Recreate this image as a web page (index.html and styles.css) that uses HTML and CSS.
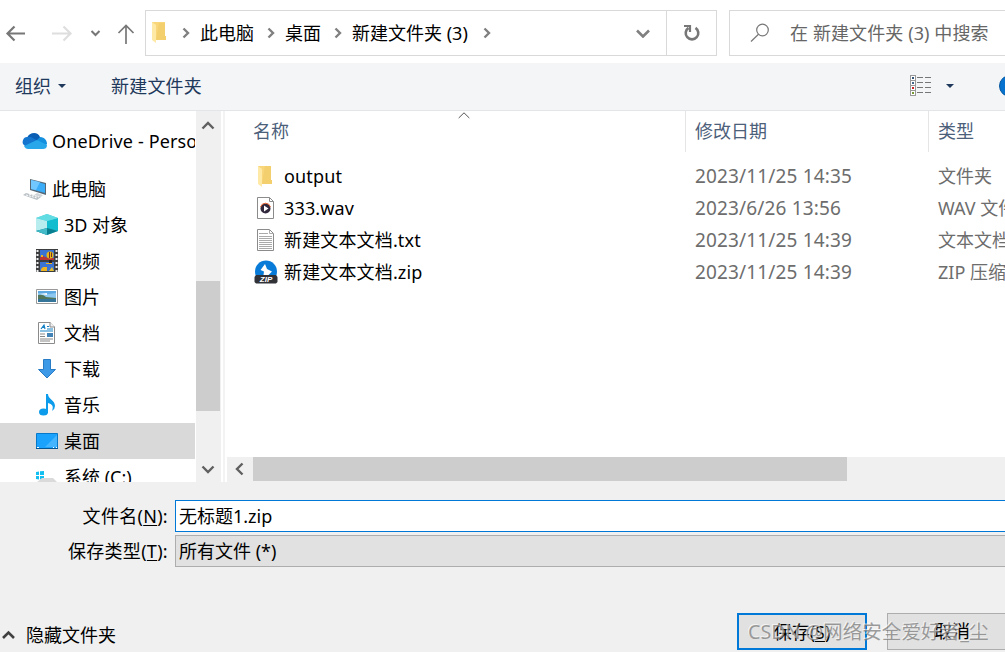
FILE: index.html
```html
<!DOCTYPE html>
<html lang="zh-CN">
<head>
    <meta charset="UTF-8">
    <title>另存为</title>
    <link rel="stylesheet" href="styles.css">
</head>
<body>
<div class="dialog">
    <div class="nav">
        <svg class="nav-btn" width="145" height="63" fill="none">
            <path d="M25 33.5H8M14.500 26.500L7.500 33.500L14.500 40.500" stroke="#777" stroke-width="2.200"/>
            <path d="M52 33.500H69M63.500 26.500L70.500 33.500L63.500 40.500" stroke="#dedede" stroke-width="2.200"/>
            <path d="M91.500 31L95.500 35L99.500 31" stroke="#777" stroke-width="2"/>
            <path d="M126 44V26M118.500 33L126 25.500L133.500 33" stroke="#777" stroke-width="1.700"/>
        </svg>
        <div class="address">
            <svg class="folder" width="16" height="22" viewBox="0 0 16 22"><path d="M1 0H14V14H15V18H5L1 16Z" fill="#f8d679"/><path d="M8 1H14V14H15V18H5Z" fill="#efc862" opacity=".5"/><path d="M1 0L5 3V21L1 18Z" fill="#ffe9a6"/></svg>
            <svg class="sep" width="8" height="12"><path d="M1.500 1.500L6 6L1.500 10.500"/></svg>
            <span class="crumb crumb1">此电脑</span>
            <svg class="sep" width="8" height="12"><path d="M1.500 1.500L6 6L1.500 10.500"/></svg>
            <span class="crumb crumb2">桌面</span>
            <svg class="sep" width="8" height="12"><path d="M1.500 1.500L6 6L1.500 10.500"/></svg>
            <span class="crumb crumb3">新建文件夹 (3)</span>
            <svg class="sep" width="8" height="12"><path d="M1.500 1.500L6 6L1.500 10.500"/></svg>
            <svg class="drop" width="14" height="9"><path d="M1 1.500L7 7.500L13 1.500" fill="none" stroke="#808080" stroke-width="2.600"/></svg>
            <div class="refresh">
                <svg width="18" height="18" fill="none"><path d="M5.500 3.800A6.300 6.300 0 1 0 12.500 3.800" stroke="#777" stroke-width="2.600"/><path d="M1 2H7V8" stroke="#777" stroke-width="2.200"/></svg>
            </div>
        </div>
        <div class="search">
            <svg width="20" height="20" fill="none" stroke="#777" stroke-width="1.200"><circle cx="12.500" cy="7" r="5.800"/><path d="M8.500 11.300L1 18.500"/></svg>
            <span>在 新建文件夹 (3) 中搜索</span>
        </div>
    </div>

    <div class="toolbar">
        <span class="tool">组织</span>
        <i class="arrow"></i>
        <span class="tool new">新建文件夹</span>
        <svg class="view" width="22" height="22" shape-rendering="crispEdges">
            <path d="M.5 .5H5.500V20.500H.5ZM.5 5.500H5.500M.5 10.500H5.500M.5 15.500H5.500" fill="#fff" stroke="#999"/>
            <path d="M7 2.500H13M15 2.500H21M7 7.500H13M15 7.500H21M7 12.500H13M15 12.500H21M7 17.500H13M15 17.500H21" stroke="#777"/>
            <path d="M2 2h2v2h-2z" fill="#357"/><path d="M2 7h2v2h-2z" fill="#468"/><path d="M2 12h2v2h-2z" fill="#c22"/><path d="M2 17h2v2h-2z" fill="#793"/>
        </svg>
        <i class="arrow"></i>
        <i class="help"></i>
    </div>

    <div class="main">
        <div class="side">
            <div class="item top onedrive">
                <svg width="26" height="18" viewBox="0 0 26 18"><path d="M5 6C7 0 16-1 18 5L21 9L8 13L3 9Z" fill="#0a5fb4"/><path d="M5 5C1 5 0 10 1 12L4 15L16 9L9 5Z" fill="#1375cd"/><path d="M15 8L18 5C23 5 25 9 25 12L22 15Z" fill="#1490df"/><path d="M2 14L15 8L25 13C25 16 23 17 21 17H6C4 17 3 16 2 14Z" fill="#28a8ea"/></svg>
                <span>OneDrive - Personal</span>
            </div>
            <div class="item top">
                <svg width="26" height="24" viewBox="0 0 26 24"><path d="M8 2L24 6V18L8 13Z" fill="#566875"/><path d="M9 3L23 7V16L9 12Z" fill="#3badf8"/><path d="M9 3L18 5L14 13L9 12Z" fill="#71c7ff"/><path d="M15 16L21 18L19 20L12 18Z" fill="#d0d5d9"/><path d="M4 16L19 20L15 23L1 18Z" fill="#bbc2c7"/><path d="M4 18L15 21M7 17L17 20" stroke="#fff" stroke-dasharray="2 1"/></svg>
                <span>此电脑</span>
            </div>
            <div class="item">
                <svg width="24" height="24" viewBox="0 0 24 24"><path d="M1 5L12 1L23 5V18L12 22L1 18Z" fill="#57ced9"/><path d="M1 5L12 8V16L1 18Z" fill="#b8edf0"/><path d="M12 8L23 5V18L12 16Z" fill="#12bdd0"/><path d="M1 18L12 15L23 18L12 22Z" fill="#087f91"/><path d="M1 5L12 1L23 5L12 8Z" fill="#62dce3"/><path d="M1 18L12 15V22Z" fill="#42bac7"/></svg>
                <span>3D 对象</span>
            </div>
            <div class="item">
                <svg width="24" height="24" viewBox="0 0 24 24"><path d="M1 0H23V23H1Z" fill="#3c3d3f"/><path d="M5 1H19V11H5ZM5 13H19V22H5Z" fill="#3974d4"/><path d="M2.500 1V23M21.500 1V23" stroke="#eee" stroke-width="2" stroke-dasharray="2 2"/><path d="M5 8L8 7L13 9L19 9V11H5Z" fill="#b93535"/><path d="M6 6h2v2h-2zM11 14h6v1h-6zM6 20L8 18H12V22H6Z" fill="#edb321"/><ellipse cx="15" cy="6" rx="3.500" ry="3.500" fill="#e9b817"/><path d="M14.500 3V9M16.500 3.500V8" stroke="#74302f"/><path d="M14 11H17V14H14Z" fill="#281f24"/><path d="M14 22L17 18L19 22Z" fill="#e5be2d"/></svg>
                <span>视频</span>
            </div>
            <div class="item">
                <svg width="24" height="24" viewBox="0 0 24 24"><path d="M1.500 4.500H22.500V18.500H1.500Z" fill="#fff" stroke="#999"/><path d="M3 6H21V17H3Z" fill="#8cc8f0"/><path d="M3 6H21V8L14 9L3 8Z" fill="#5ea9e2"/><path d="M3 10Q8 9 11 12L21 13V15H3Z" fill="#51765a"/><path d="M3 14L21 14V17H3Z" fill="#35759a"/><path d="M5 9L12 8V10Z" fill="#fff"/></svg>
                <span>图片</span>
            </div>
            <div class="item">
                <svg width="24" height="24" viewBox="0 0 24 24"><path d="M3.500 1.500H15L19.500 6V22.500H3.500Z" fill="#fff" stroke="#8b8b8b"/><path d="M15 1V6H20" fill="#eee" stroke="#8b8b8b"/><path d="M6 8L9 4L10 8M7 6.500H10M12 5.500H14M12 8H18M5 10H18" fill="none" stroke="#1681c5" stroke-width="1.200"/><path d="M5 13H10M5 15.500H10M5 18H18M5 20H15" stroke="#888"/><path d="M12 12H18V16H12Z" fill="#4382b5"/></svg>
                <span>文档</span>
            </div>
            <div class="item">
                <svg width="24" height="24" viewBox="0 0 24 24"><path d="M8.500 2.500H15.500V12.500H20.500L12 21L3.500 12.500H8.500Z" fill="#3e99e7" stroke="#287cc6"/></svg>
                <span>下载</span>
            </div>
            <div class="item">
                <svg width="24" height="24" viewBox="0 0 24 24"><ellipse cx="8.500" cy="19" rx="4.500" ry="3.500" fill="#0c9ceb"/><path d="M11 1H13C13 6 20 7 20 13Q20 16 17 18C19 13 17 11 13 10V20H11Z" fill="#0c9ceb"/></svg>
                <span>音乐</span>
            </div>
            <div class="item selected">
                <svg width="24" height="24" viewBox="0 0 24 24"><path d="M1.500 4.500H22.500V19.500H1.500Z" fill="#1aa2fd" stroke="#0879c8"/><path d="M13 15L22 6V18H10Z" fill="#45b5ff"/><path d="M1 19.500H23" stroke="#075590"/><path d="M2 18.500H4M18 18.500H19M21 18.500H22" stroke="#fff"/></svg>
                <span>桌面</span>
            </div>
            <div class="item">
                <svg width="24" height="24" viewBox="0 0 24 24"><path d="M1 7L4 6.500V10H1ZM5 6.300L9 6V10H5ZM1 11H4V14.500L1 14ZM5 11H9V15L5 14.500Z" fill="#12bff0"/><path d="M1 18L7 13H18L23 18V22H1Z" fill="#dadada"/><path d="M1 18H23V23H1Z" fill="#aaa"/></svg>
                <span class="disk">系统 (C:)</span>
            </div>
        </div>
        <div class="vscroll">
            <svg width="14" height="9"><path d="M1.500 7.500L7 2L12.500 7.500"/></svg>
            <div class="thumb"></div>
            <svg class="down" width="14" height="9"><path d="M1.500 1.500L7 7L12.500 1.500"/></svg>
        </div>
        <div class="content">
            <div class="head">
                <div class="name">名称<svg class="sort" width="12" height="7"><path d="M.7 6L6 .8L11.300 6" fill="none" stroke="#555"/></svg></div>
                <div class="date">修改日期</div>
                <div class="type">类型</div>
            </div>
            <div class="row">
                <div class="name"><svg width="24" height="24" viewBox="0 0 24 24"><path d="M4 2H17V16H18V20H8L4 18Z" fill="#f8d679"/><path d="M11 2H17V16H18V20H8Z" fill="#efc862" opacity=".5"/><path d="M4 2L8 5V23L4 20Z" fill="#ffe9a6"/></svg><span class="file">output</span></div>
                <div class="date">2023/11/25 14:35</div>
                <div class="type">文件夹</div>
            </div>
            <div class="row">
                <div class="name"><svg width="24" height="24" viewBox="0 0 24 24"><path d="M3.500 1.500H15.500L19.500 5.500V22.500H3.500Z" fill="#fff" stroke="#8b8b8b"/><path d="M15.500 1.500V5.500H19.500" fill="none" stroke="#8b8b8b"/><circle cx="11.500" cy="12.500" r="5" fill="#32283d"/><path d="M6.500 11A5.200 5.200 0 0 1 16.500 11" fill="none" stroke="#e76531"/><path d="M10 9.500L14.500 12.500L10 15.500Z" fill="#fff"/></svg><span class="file">333.wav</span></div>
                <div class="date">2023/6/26 13:56</div>
                <div class="type">WAV 文件</div>
            </div>
            <div class="row">
                <div class="name"><svg width="24" height="24" viewBox="0 0 24 24"><path d="M3.500 1.500H15.500L19.500 5.500V22.500H3.500Z" fill="#fff" stroke="#8b8b8b"/><path d="M15.500 1.500V5.500H19.500M5 5.500H14M5 8.500H18M5 10.500H18M5 12.500H18M5 14.500H18M5 16.500H18M5 18.500H18M5 20.500H18" fill="none" stroke="#aaa"/></svg><span class="file">新建文本文档.txt</span></div>
                <div class="date">2023/11/25 14:39</div>
                <div class="type">文本文档</div>
            </div>
            <div class="row">
                <div class="name"><svg width="24" height="24" viewBox="0 0 24 24"><circle cx="12" cy="11.500" r="11" fill="#087bd8"/><path d="M11 4L6.500 10L10 11.500L9.500 15H14.500L18 11.500L13 9Z" fill="#fff"/><path d="M2 15H22L23.500 17V22L22 23.500H2L.5 22V17Z" fill="#303238"/><text class="zip" x="12" y="22" text-anchor="middle">ZIP</text></svg><span class="file">新建文本文档.zip</span></div>
                <div class="date">2023/11/25 14:39</div>
                <div class="type">ZIP 压缩文件</div>
            </div>
            <div class="hscroll">
                <svg width="9" height="14"><path d="M7.500 1.500L2 7L7.500 12.500"/></svg>
                <div class="thumb"></div>
            </div>
        </div>
    </div>

    <div class="form">
        <label>文件名(<u>N</u>):</label>
        <div class="input">无标题1.zip</div>
        <label>保存类型(<u>T</u>):</label>
        <div class="select">所有文件 (*)</div>
    </div>

    <div class="foot">
        <svg width="15" height="10"><path d="M2 8L7.500 2.500L13 8" fill="none" stroke="#404040" stroke-width="2.600"/></svg>
        <span class="hide">隐藏文件夹</span>
        <div class="btn save">保存(<u>S</u>)</div>
        <div class="btn cancel">取消</div>
        <div class="mark">CSDN @网络安全爱好者_尘</div>
    </div>
</div>
</body>
</html>
```
FILE: styles.css
```css
* {
    box-sizing: border-box;
}
body {
    margin: 0;
    overflow: hidden;
    font: 18px/24px "Noto Sans", "Noto Sans CJK SC", sans-serif;
    font-weight: 380;
    color: #000;
    white-space: nowrap;
}
svg {
    display: block;
    flex: none;
}
.dialog {
    width: 1005px;
    height: 652px;
    overflow: hidden;
    background: #f0f0f0;
}

/* 地址栏 */
.nav {
    display: flex;
    height: 63px;
    background: #fff;
}
.address {
    display: flex;
    align-items: center;
    width: 572px;
    height: 46px;
    margin-top: 10px;
    border: 1px solid #d9d9d9;
    flex: none;
}
.folder {
    margin-left: 5px;
}
.sep {
    fill: none;
    stroke: #808080;
    stroke-width: 2.4;
}
.folder + .sep {
    margin-left: 15px;
}
.crumb {
    margin: 0 12px 0 10px;
    flex: none;
}
.crumb1 {
    width: 55px;
}
.crumb2 {
    width: 37px;
}
.crumb3 {
    width: 119px;
}
.drop {
    margin-left: auto;
}
.refresh {
    display: flex;
    align-items: center;
    justify-content: center;
    width: 50px;
    height: 44px;
    margin-left: 16px;
    border-left: 1px solid #d9d9d9;
}
.search {
    display: flex;
    align-items: center;
    width: 300px;
    height: 46px;
    margin: 10px 0 0 12px;
    padding-left: 20px;
    border: 1px solid #d9d9d9;
    color: #666;
    flex: none;
}
.search span {
    margin-left: 20px;
    letter-spacing: .1px;
}

.toolbar {
    display: flex;
    align-items: center;
    height: 48px;
    padding: 0 0 2px 15px;
    background: #f4f5f7;
    border-bottom: 1px solid #e4e5e7;
    color: #1e395b;
}
.arrow {
    border: 4px solid transparent;
    border-top-color: #1e395b;
    border-bottom: 0;
    margin-left: 7px;
}
.new {
    margin-left: 45px;
    letter-spacing: .2px;
}
.view {
    margin-left: auto;
}
.view + .arrow {
    margin-left: 14px;
}
.help {
    width: 22px;
    height: 22px;
    margin: 0 -16px 0 45px;
    border: 1px solid #0758a0;
    border-radius: 50%;
    background: #0873cf;
    flex: none;
}

/* 左侧目录 */
.main {
    display: flex;
    height: 371px;
    background: #fff;
    overflow: hidden;
}
.side {
    width: 195px;
    padding-top: 12px;
    overflow: hidden;
}
.item {
    display: flex;
    align-items: center;
    gap: 5px;
    height: 36px;
    padding-left: 35px;
}
.top {
    padding-left: 22px;
    gap: 4px;
}
.onedrive {
    margin-bottom: 12px;
}
.onedrive span {
    letter-spacing: .15px;
}
.selected {
    background: #d9d9d9;
}
.vscroll {
    display: flex;
    flex-direction: column;
    width: 25px;
    margin-left: 1px;
    padding: 10px 0 8px;
    background: #f0f0f0;
}
.vscroll svg, .hscroll svg {
    fill: none;
    stroke: #606060;
    stroke-width: 2.4;
}
.vscroll svg {
    margin-left: 5px;
}
.vscroll .thumb {
    width: 24px;
    height: 130px;
    margin-top: 151px;
    background: #cdcdcd;
}
.vscroll .down {
    margin-top: auto;
}
.content {
    display: flex;
    flex-direction: column;
    flex: 1;
    margin-left: 2px;
    border-left: 2px solid #f3f3f3;
    overflow: hidden;
}

/* 文件列表 */
.head, .row {
    display: grid;
    grid-template-columns: 460px 243px 160px;
    height: 32px;
    line-height: 32px;
    color: #6d6d6d;
}
.head {
    height: 41px;
    line-height: 41px;
    margin-bottom: 8px;
    color: #4c607a;
}
.head .name {
    position: relative;
    padding-left: 28px;
}
.sort {
    position: absolute;
    left: 233px;
    top: 1px;
}
.head .date, .head .type {
    border-left: 1px solid #e5e5e5;
}
.date {
    padding-left: 10px;
}
.head .date, .head .type {
    padding-left: 9px;
}
.row .date {
    font-size: 19px;
    letter-spacing: .15px;
}
.type {
    padding-left: 10px;
}
.row .name {
    display: flex;
    align-items: center;
    gap: 6px;
    padding-left: 29px;
    color: #000;
}
.file {
    letter-spacing: .15px;
}
.zip {
    font: italic bold 8px "Liberation Sans", sans-serif;
    fill: #fff;
}
.hscroll {
    display: flex;
    height: 25px;
    margin: auto 0 0 2px;
    background: #f0f0f0;
}
.hscroll svg {
    margin: 5px 9px 0 8px;
}
.hscroll .thumb {
    width: 594px;
    height: 24px;
    background: #cdcdcd;
}

.form {
    display: grid;
    grid-template-columns: 168px 850px;
    grid-template-rows: 32px 32px;
    gap: 3px 7px;
    padding-top: 18px;
    line-height: 32px;
}
.form label {
    text-align: right;
    letter-spacing: .3px;
}
.input, .select {
    padding-left: 3px;
    line-height: 30px;
    border: 1px solid #0078d7;
    background: #fff;
}
.select {
    background: #e1e1e1;
    border-color: #adadad;
}
u {
    text-underline-offset: 2px;
    text-decoration-thickness: 1px;
}

.foot {
    position: relative;
    display: flex;
    align-items: center;
    height: 37px;
    margin-top: 46px;
}
.hide {
    width: 712px;
    padding: 7px 0 0 10px;
    flex: none;
}
.foot > svg {
    margin: 7px 0 0 1px;
}
.btn {
    width: 130px;
    height: 37px;
    margin-left: 9px;
    border: 2px solid #0078d7;
    background: #e1e1e1;
    text-align: center;
    line-height: 34px;
    flex: none;
}
.cancel {
    margin-left: 20px;
    border: 1px solid #adadad;
}
/* 水印 */
.mark {
    position: absolute;
    left: 748px;
    top: 7px;
    color: rgba(125, 125, 125, .75);
    font-size: 19.6px;
    text-shadow: -1px -1px 0 rgba(255, 255, 255, .6);
}
```
